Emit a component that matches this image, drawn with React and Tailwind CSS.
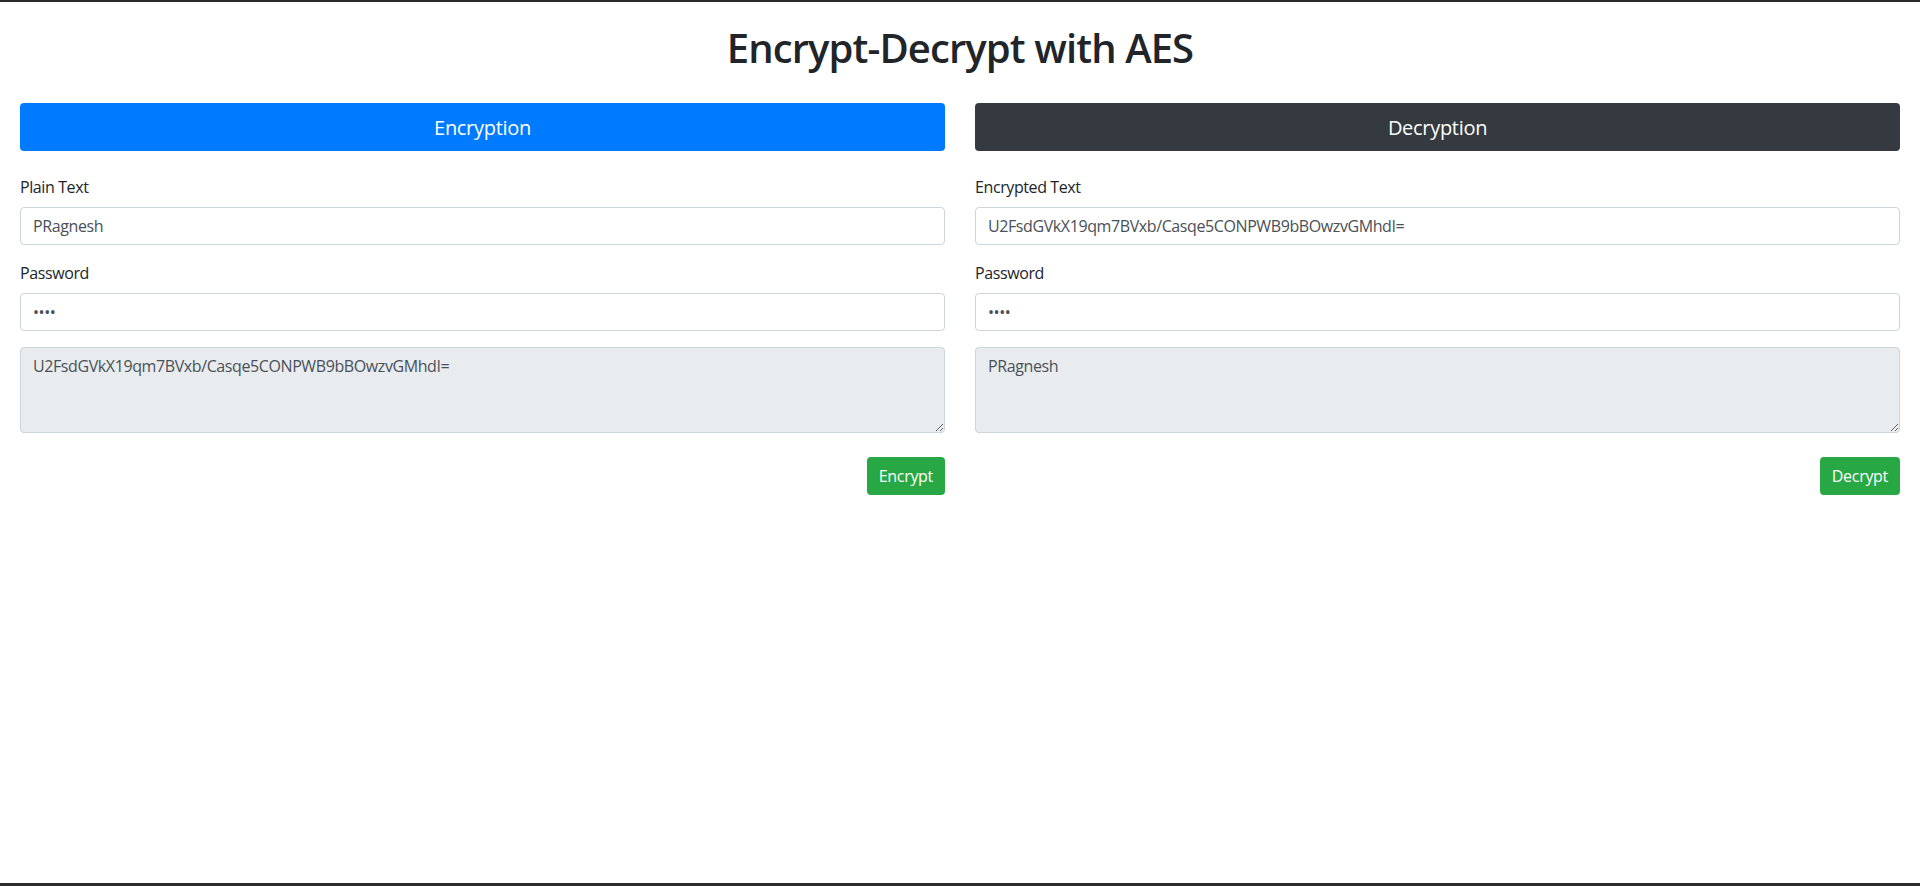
import React from 'react';

const font = { fontFamily: '"Open Sans", "Noto Sans", sans-serif' };

function Field({ label, value, type = 'text' }) {
  return (
    <div className="mb-4">
      <label className="block mb-2 text-[16px] leading-6 tracking-[-0.4px] text-[#212529]">{label}</label>
      <input
        type={type}
        defaultValue={value}
        className="block w-full h-[38px] px-3 py-1.5 text-[16px] tracking-[-0.4px] text-[#495057] bg-white border border-[#ced4da] rounded-[4px] outline-none"
      />
    </div>
  );
}

function Panel({ title, titleBg, label, input, output, action }) {
  return (
    <div className="flex-1 min-w-0">
      <div className={`h-12 flex items-center justify-center pt-px rounded-[4px] text-white text-[20px] tracking-[-0.3px] ${titleBg}`}>
        {title}
      </div>
      <div className="mt-6">
        <Field label={label} value={input} />
        <Field label="Password" value="1234" type="password" />
        <textarea
          readOnly
          defaultValue={output}
          className="block w-full h-[86px] px-3 py-1.5 text-[16px] leading-6 tracking-[-0.4px] text-[#495057] bg-[#e9ecef] border border-[#ced4da] rounded-[4px] outline-none mb-6"
        />
        <div className="flex justify-end">
          <button className="h-[38px] px-3 rounded-[4px] bg-[#28a745] text-white text-[16px] tracking-[-0.3px]">{action}</button>
        </div>
      </div>
    </div>
  );
}

export default function App() {
  const cipher = 'U2FsdGVkX19qm7BVxb/Casqe5CONPWB9bBOwzvGMhdI=';
  return (
    <div style={font} className="h-screen flex flex-col bg-white border-t-2 border-b-[3px] border-[#2b2b2b] text-[#212529]">
      <h1 className="text-center text-[40px] leading-[48px] font-semibold tracking-[-0.9px] mt-[22px] mb-[31px]">Encrypt-Decrypt with AES</h1>
      <div className="flex gap-[30px] px-5">
        <Panel
          title="Encryption"
          titleBg="bg-[#007bff]"
          label="Plain Text"
          input="PRagnesh"
          output={cipher}
          action="Encrypt"
        />
        <Panel
          title="Decryption"
          titleBg="bg-[#343a40]"
          label="Encrypted Text"
          input={cipher}
          output="PRagnesh"
          action="Decrypt"
        />
      </div>
    </div>
  );
}
